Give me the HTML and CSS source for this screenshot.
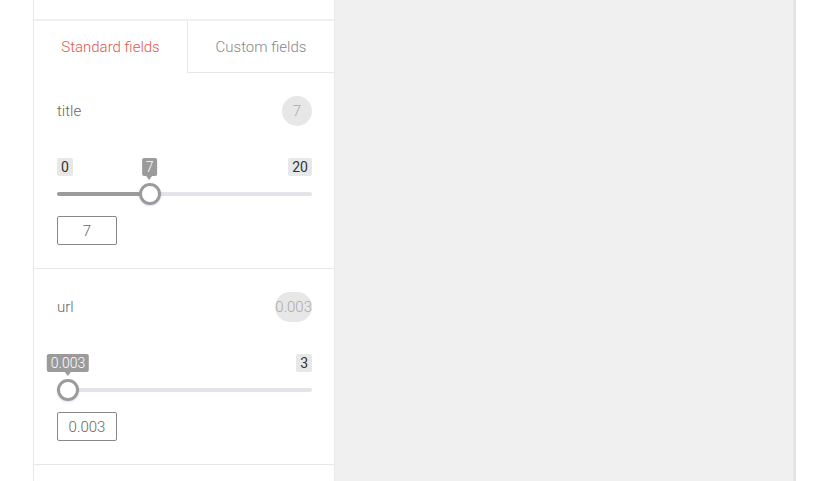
FILE: index.html
```html
<!DOCTYPE html>
<html lang="en">
<head>
<meta charset="UTF-8">
<meta name="viewport" content="width=device-width, initial-scale=1.0">
<title>Field weights</title>
<link rel="stylesheet" href="styles.css">
</head>
<body>
<div class="app">
  <div class="sidebar">
    <div class="sidebar-top"></div>
    <div class="tabs">
      <div class="tab active">Standard fields</div>
      <div class="tab">Custom fields</div>
    </div>

    <div class="field">
      <div class="field-head">
        <span class="field-name">title</span>
        <span class="badge">7</span>
      </div>
      <div class="slider">
        <span class="limit min">0</span>
        <span class="tip" style="left: calc(11px + 0.35 * (100% - 22px))">7</span>
        <span class="limit max">20</span>
        <div class="track">
          <div class="fill" style="width: calc(11px + 0.35 * (100% - 22px))"></div>
        </div>
        <span class="thumb" style="left: calc(11px + 0.35 * (100% - 22px))"></span>
      </div>
      <input class="value" type="text" value="7">
    </div>

    <div class="field">
      <div class="field-head">
        <span class="field-name">url</span>
        <span class="badge">0.003</span>
      </div>
      <div class="slider">
        <span class="tip" style="left: 11px">0.003</span>
        <span class="limit max">3</span>
        <div class="track">
          <div class="fill" style="width: 11px"></div>
        </div>
        <span class="thumb" style="left: 11px"></span>
      </div>
      <input class="value" type="text" value="0.003">
    </div>
  </div>
  <div class="preview"></div>
</div>
</body>
</html>
```

FILE: styles.css
```css
body {
  font-family: Roboto, "Liberation Sans", sans-serif;
  background-color: #fff;
  margin: 0;
  padding: 0;
}

.app {
  display: flex;
  width: 761px;
  height: 481px;
  margin-left: 33px;
  border-left: 1px solid #e9e9e9;
  border-right: 1px solid #e2e2e2;
  overflow: hidden;
}

.sidebar {
  width: 300px;
  flex-shrink: 0;
  border-right: 1px solid #e9e9e9;
}

.sidebar-top {
  height: 19px;
  border-bottom: 2px solid #f0f0f0;
}

.tabs {
  display: flex;
  height: 52px;
}

.tab {
  display: flex;
  align-items: center;
  justify-content: center;
  font-size: 15px;
  font-weight: 300;
  color: #888;
  border-bottom: 1px solid #e6e6e6;
}

.tab:first-child {
  width: 153px;
}

.tab + .tab {
  flex: 1;
  border-left: 1px solid #e6e6e6;
}

.tab.active {
  color: #e0574a;
  border-bottom-color: transparent;
}

.field {
  padding: 23px 22px 23px 23px;
  border-bottom: 1px solid #e6e6e6;
}

.field-head {
  display: flex;
  align-items: center;
  justify-content: space-between;
  height: 30px;
}

.field-name {
  font-size: 15px;
  font-weight: 300;
  color: #666;
}

.badge {
  min-width: 30px;
  height: 30px;
  padding: 0;
  box-sizing: border-box;
  border-radius: 15px;
  background-color: #e7e7e7;
  color: #aaa;
  font-size: 15px;
  font-weight: 300;
  display: flex;
  align-items: center;
  justify-content: center;
}

.slider {
  position: relative;
  height: 58px;
  margin-top: 32px;
}

.limit, .tip {
  position: absolute;
  top: 0;
  height: 18px;
  line-height: 18px;
  padding: 0 4px;
  border-radius: 2px;
  font-size: 14px;
}

.limit {
  background-color: #e8e8e8;
  color: #333;
}

.limit.min {
  left: 0;
}

.limit.max {
  right: 0;
}

.tip {
  background-color: #9b9b9b;
  color: #fff;
  font-weight: 300;
  transform: translateX(-50%);
}

.tip::after {
  content: "";
  position: absolute;
  left: 50%;
  bottom: -4px;
  margin-left: -3px;
  border-left: 3px solid transparent;
  border-right: 3px solid transparent;
  border-top: 4px solid #9b9b9b;
}

.track {
  position: absolute;
  top: 34px;
  left: 0;
  right: 0;
  height: 4px;
  border-radius: 2px;
  background-color: #e3e3ea;
}

.fill {
  height: 100%;
  border-radius: 2px;
  background-color: #9b9b9b;
}

.thumb {
  position: absolute;
  top: 25px;
  width: 22px;
  height: 22px;
  margin-left: -11px;
  box-sizing: border-box;
  border: 3px solid #9b9b9b;
  border-radius: 50%;
  background-color: #fff;
  box-shadow: 0 1px 2px rgba(120, 110, 200, 0.25);
}

.value {
  display: block;
  width: 60px;
  height: 29px;
  box-sizing: border-box;
  border: 1px solid #888;
  border-radius: 2px;
  padding: 0;
  text-align: center;
  font-family: Roboto, "Liberation Sans", sans-serif;
  font-size: 15px;
  font-weight: 300;
  color: #666;
}

.preview {
  flex: 1;
  background-color: #f0f0f0;
  border-right: 2px solid #e6e6e6;
}
```
